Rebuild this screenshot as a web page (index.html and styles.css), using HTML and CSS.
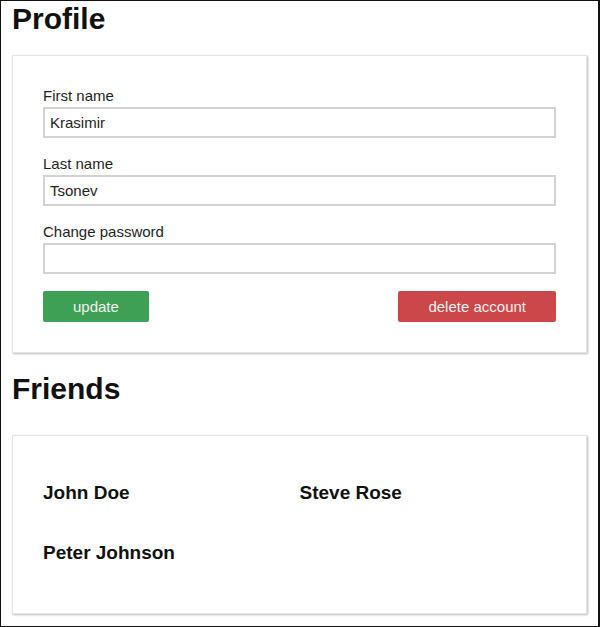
FILE: index.html
```html
<!DOCTYPE html>
<html lang="en">
<head>
<meta charset="utf-8">
<title>Profile</title>
<link rel="stylesheet" href="styles.css">
</head>
<body>
<div class="frame">
  <h1 class="title">Profile</h1>
  <section class="card profile">
    <div class="field">
      <label class="label" for="first">First name</label>
      <input class="input" id="first" type="text" value="Krasimir">
    </div>
    <div class="field">
      <label class="label" for="last">Last name</label>
      <input class="input" id="last" type="text" value="Tsonev">
    </div>
    <div class="field">
      <label class="label" for="pass">Change password</label>
      <input class="input" id="pass" type="password" value="">
    </div>
    <div class="actions">
      <button class="btn btn-update" type="button">update</button>
      <button class="btn btn-delete" type="button">delete account</button>
    </div>
  </section>
  <h1 class="title title-friends">Friends</h1>
  <section class="card friends">
    <div class="friend">John Doe</div>
    <div class="friend">Steve Rose</div>
    <div class="friend">Peter Johnson</div>
  </section>
</div>
</body>
</html>
```

FILE: styles.css
```css
* { box-sizing: border-box; }

html, body {
  margin: 0;
  padding: 0;
  background: #fff;
}

body {
  font-family: "Liberation Sans", Arial, Helvetica, sans-serif;
  color: #1a1a1a;
}

.frame {
  width: 600px;
  height: 627px;
  border: 1px solid #111;
  border-right-width: 2px;
  padding: 0 11px;
  overflow: hidden;
}

.title {
  margin: 0 0 18px;
  font-size: 30px;
  line-height: 36px;
  font-weight: 700;
  color: #111;
}

.title-friends {
  margin-bottom: 28px;
}

.card {
  background: #fff;
  border: 1px solid #e4e4e4;
  box-shadow: 1px 1px 2px rgba(0, 0, 0, 0.28);
}

.profile {
  padding: 31px 30px 30px;
  margin-bottom: 18px;
}

.field {
  margin-bottom: 17px;
}

.field:last-of-type {
  margin-bottom: 16px;
}

.label {
  display: block;
  font-size: 15px;
  line-height: 17px;
  margin-bottom: 3px;
  color: #1e1e1e;
}

.input {
  display: block;
  width: 100%;
  height: 31px;
  margin: 0;
  padding: 0 5px;
  border: 2px solid #d2d2d2;
  border-radius: 0;
  font-family: "Liberation Sans", Arial, Helvetica, sans-serif;
  font-size: 15px;
  color: #1e1e1e;
  background: #fff;
  outline: none;
}

.actions {
  display: flex;
  justify-content: space-between;
}

.btn {
  height: 31px;
  padding: 0 30px;
  border: 0;
  border-radius: 2px;
  font-family: "Liberation Sans", Arial, Helvetica, sans-serif;
  font-size: 15px;
  color: #f2f2f2;
  cursor: pointer;
}

.btn-update {
  background: #3da055;
}

.btn-delete {
  background: #cb4749;
}

.friends {
  display: grid;
  grid-template-columns: 1fr 1fr;
  padding: 27px 30px 30px;
}

.friend {
  margin: 19px 0;
  font-size: 19px;
  line-height: 22px;
  font-weight: 700;
  color: #111;
}
```
